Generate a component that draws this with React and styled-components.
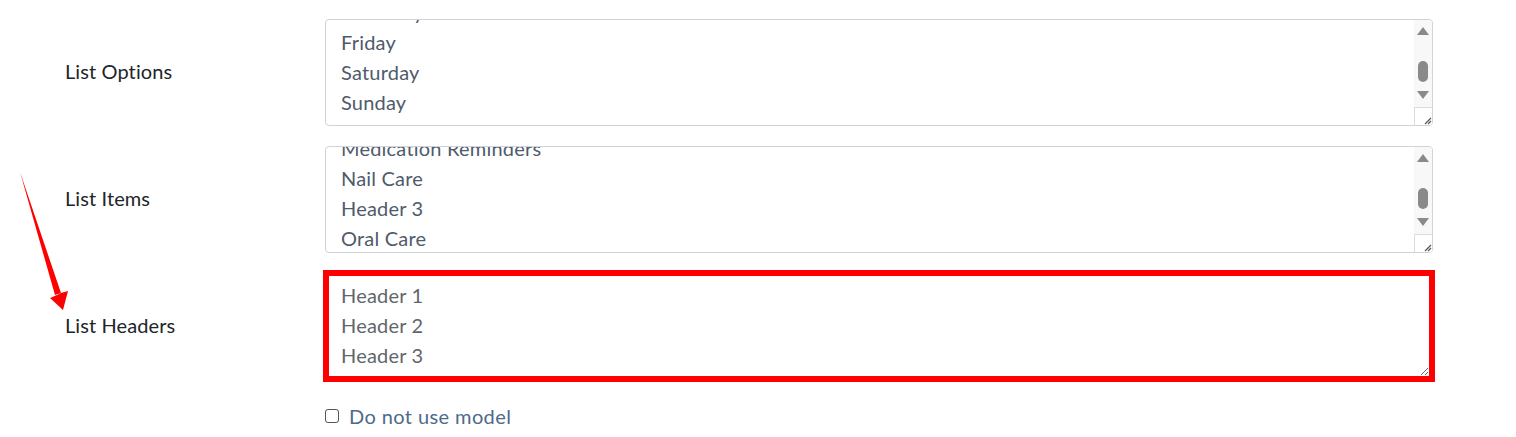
import React, { useEffect, useRef } from 'react'
import styled, { createGlobalStyle } from 'styled-components'

const GlobalStyle = createGlobalStyle`
  html, body {
    margin: 0;
    padding: 0;
    background: #ffffff;
  }
  body {
    font-family: Lato, "Noto Sans", Arial, sans-serif;
  }
`

const Page = styled.div`
  position: relative;
  width: 1516px;
  height: 437px;
  padding: 19px 0 0 65px;
  box-sizing: border-box;
  overflow: hidden;
`

const Row = styled.div`
  display: grid;
  grid-template-columns: 260px 1108px;
  align-items: center;
  margin-bottom: ${p => p.gap || 20}px;
`

const Label = styled.label`
  font-size: 20px;
  color: #212529;
  letter-spacing: 0.1px;
  margin-top: -3px;
`

const ListBox = styled.div`
  display: flex;
  height: 107px;
  border: 1px solid #ced4da;
  border-radius: 4px;
  box-sizing: border-box;
  overflow: hidden;
  background: #fff;
`

const Area = styled.textarea`
  flex: 1;
  border: none;
  outline: none;
  resize: none;
  overflow: hidden;
  padding: 5px 15px 14px;
  margin: 0;
  font-family: inherit;
  font-size: 20px;
  line-height: 30px;
  letter-spacing: 0.2px;
  color: #4f5b6b;
  background: transparent;
`

const Rail = styled.div`
  width: 18px;
  display: flex;
  flex-direction: column;
  align-items: center;
  background: #f8f8f8;
  padding-top: 7px;
  box-sizing: border-box;
`

const Thumb = styled.div`
  width: 10px;
  height: 21px;
  border-radius: 5px;
  background: #8a8a8a;
  margin: 26px 0 9px;
`

const Corner = styled.div`
  margin-top: auto;
  width: 18px;
  height: 18px;
  border-top: 1px solid #dcdcdc;
  border-left: 1px solid #dcdcdc;
  box-sizing: border-box;
  background: #fff;
  display: flex;
  align-items: flex-end;
  justify-content: flex-end;
`

const HeaderArea = styled.textarea`
  width: 1112px;
  height: 112px;
  margin-left: -2px;
  box-sizing: border-box;
  border: 6px solid #ff0000;
  outline: none;
  padding: 4px 12px;
  font-family: inherit;
  font-size: 20px;
  line-height: 30px;
  letter-spacing: 0.2px;
  color: #62666b;
  resize: vertical;
  overflow: hidden;
  display: block;
`

const CheckRow = styled.div`
  display: flex;
  align-items: center;
  gap: 10px;
  margin-left: 260px;
  margin-top: -4px;
`

const Box = styled.span`
  width: 12px;
  height: 12px;
  border: 1.5px solid #555;
  border-radius: 3px;
  display: inline-block;
`

const CheckLabel = styled.span`
  font-size: 20px;
  letter-spacing: 0.4px;
  color: #4d6a8a;
`

const Arrow = styled.svg`
  position: absolute;
  left: 0;
  top: 0;
  pointer-events: none;
`

function Grip() {
  return (
    <svg width="10" height="10" viewBox="0 0 10 10">
      <path d="M9 3 L3 9 M9 6 L6 9" stroke="#555" strokeWidth="1.2" />
    </svg>
  )
}

function ScrollList({ lines, scroll }) {
  const ref = useRef(null)
  useEffect(() => {
    if (ref.current) ref.current.scrollTop = scroll
  }, [scroll])
  return (
    <ListBox>
      <Area ref={ref} readOnly value={lines.join('\n')} />
      <Rail>
        <svg width="12" height="8" viewBox="0 0 12 8"><path d="M6 0 L12 8 L0 8 Z" fill="#8a8a8a" /></svg>
        <Thumb />
        <svg width="12" height="8" viewBox="0 0 12 8"><path d="M0 0 L12 0 L6 8 Z" fill="#8a8a8a" /></svg>
        <Corner><Grip /></Corner>
      </Rail>
    </ListBox>
  )
}

const days = ['Monday', 'Tuesday', 'Wednesday', 'Thursday', 'Friday', 'Saturday', 'Sunday']
const items = ['Header 1', 'Bathing', 'Dressing', 'Header 2', 'Grooming', 'Medication Reminders', 'Nail Care', 'Header 3', 'Oral Care', 'Toileting']

export default function App() {
  return (
    <>
      <GlobalStyle />
      <Page>
        <Row>
          <Label>List Options</Label>
          <ScrollList lines={days} scroll={118} />
        </Row>
        <Row gap={17}>
          <Label>List Items</Label>
          <ScrollList lines={items} scroll={169} />
        </Row>
        <Row gap={26}>
          <Label>List Headers</Label>
          <HeaderArea readOnly value={'Header 1\nHeader 2\nHeader 3'} />
        </Row>
        <CheckRow>
          <Box />
          <CheckLabel>Do not use model</CheckLabel>
        </CheckRow>
        <Arrow width="100" height="330">
          <path d="M20 172 L61 293 L55 295 Z" fill="#ff0000" />
          <path d="M63 310 L50 298 L57 295 L61 293 L68 291 Z" fill="#ff0000" />
        </Arrow>
      </Page>
    </>
  )
}
